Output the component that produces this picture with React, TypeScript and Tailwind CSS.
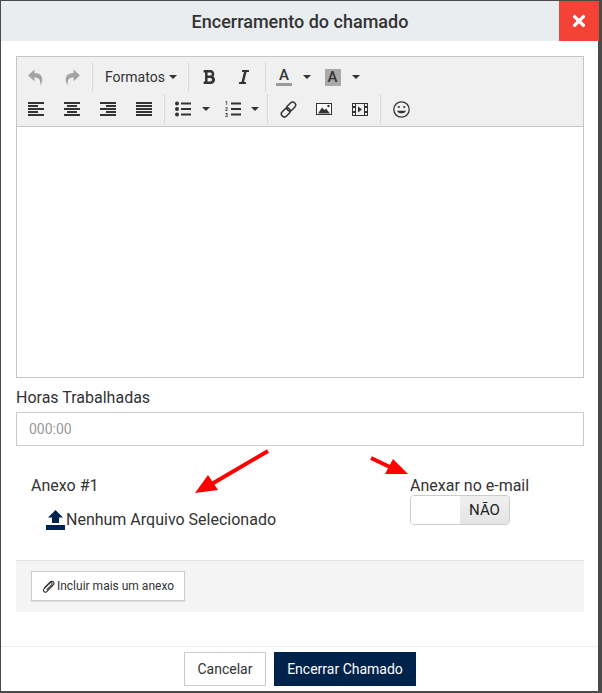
import React from "react";
import { FaBold, FaItalic, FaTimes } from "react-icons/fa";

const Sep = () => <div className="w-px h-[30px] bg-[#d9d9d9] shrink-0" />;
const Gap = ({ w }: { w: number }) => <div className="shrink-0" style={{ width: w }} />;
const Caret = ({ w = 10 }: { w?: number }) => (
  <div className="flex justify-center shrink-0" style={{ width: w }}>
    <span className="block w-0 h-0 border-x-[4px] border-x-transparent border-t-[4px] border-t-[#333]" />
  </div>
);
const Btn = ({ children, w = 36 }: { children: React.ReactNode; w?: number }) => (
  <div className="h-[30px] flex items-center justify-center text-[#333] shrink-0" style={{ width: w }}>{children}</div>
);

const Align = ({ kind }: { kind: "l" | "c" | "r" | "j" }) => {
  const rows = [16, 10, 16, 10, 16];
  return (
    <svg width="16" height="14" viewBox="0 0 16 14" fill="#333">
      {rows.map((w, i) => {
        const ww = kind === "j" ? 16 : w;
        const x = kind === "l" || kind === "j" ? 0 : kind === "c" ? (16 - ww) / 2 : 16 - ww;
        return <rect key={i} x={x} y={i * 3} width={ww} height="2" />;
      })}
    </svg>
  );
};

const Undo = ({ flip }: { flip?: boolean }) => (
  <svg width="16" height="17" viewBox="0 0 15 16" fill="#a3a3a3" className={flip ? "-scale-x-100" : ""}>
    <path d="M6 0.5 0 6l6 5.5V8c4 0 6 1.5 5.5 7.5C14 12.5 15.5 3.8 6 3.8Z" />
  </svg>
);

const Bullets = () => (
  <svg width="16" height="16" viewBox="0 0 16 16" fill="#333">
    <circle cx="2" cy="2.5" r="2" /><circle cx="2" cy="8" r="2" /><circle cx="2" cy="13.5" r="2" />
    <rect x="6" y="1.5" width="10" height="2" /><rect x="6" y="7" width="10" height="2" /><rect x="6" y="12.5" width="10" height="2" />
  </svg>
);
const Numbers = () => (
  <svg width="16" height="18" viewBox="0 0 16 18" fill="#333">
    <text x="0" y="5" fontSize="5" fontWeight="700" fontFamily="Roboto, sans-serif">1</text>
    <text x="0" y="11" fontSize="5" fontWeight="700" fontFamily="Roboto, sans-serif">2</text>
    <text x="0" y="17" fontSize="5" fontWeight="700" fontFamily="Roboto, sans-serif">3</text>
    <rect x="6" y="2.5" width="10" height="2" /><rect x="6" y="8" width="10" height="2" /><rect x="6" y="13.5" width="10" height="2" />
  </svg>
);
const LinkIcon = () => (
  <svg width="17" height="17" viewBox="0 0 17 17" fill="none" stroke="#333" strokeWidth="1.5">
    <rect x="8.2" y="0.5" width="6" height="10" rx="3" transform="rotate(45 11.2 5.5)" />
    <rect x="2.8" y="6.5" width="6" height="10" rx="3" transform="rotate(45 5.8 11.5)" />
  </svg>
);
const ImageIcon = () => (
  <svg width="16" height="14" viewBox="0 0 16 14">
    <rect x="0.5" y="1.5" width="15" height="11" fill="#fff" stroke="#333" />
    <path d="M2 11.5 6 5.5 8.5 8 10 6.5 14 11.5Z" fill="#333" />
    <circle cx="12.5" cy="4" r="1.2" fill="#333" />
  </svg>
);
const FilmIcon = () => (
  <svg width="16" height="13" viewBox="0 0 16 13" fill="#333">
    <path fillRule="evenodd" d="M0 0H16V13H0ZM1 1V3H3V1ZM13 1V3H15V1ZM1 5V8H3V5ZM13 5V8H15V5ZM1 10V12H3V10ZM13 10V12H15V10ZM4 1V12H12V1Z" />
    <path d="M6 3.5 10 6.5 6 9.5Z" />
  </svg>
);
const Smile = () => (
  <svg width="17" height="17" viewBox="0 0 17 17" fill="none" stroke="#333" strokeWidth="1.3">
    <circle cx="8.5" cy="8.5" r="7.7" />
    <circle cx="5.8" cy="6" r="1.1" fill="#333" stroke="none" />
    <circle cx="11.2" cy="6" r="1.1" fill="#333" stroke="none" />
    <path d="M4 9.8c1 3.4 8 3.4 9 0Z" fill="#333" stroke="none" />
  </svg>
);
const Clip = () => (
  <svg width="13" height="13" viewBox="0 0 13 13" fill="none" stroke="#333" strokeWidth="1.1">
    <path d="M2.2 8 8 2.2c1.2-1.2 3-1 3.6 0 .7 1 .4 2.2-.4 3L5 11.4c-1 1-2.3 1-3 .3s-.8-2 .2-3l5.6-5.6c.7-.7 1.5-.7 2-.2s.5 1.3-.2 2L4.6 9.9" />
  </svg>
);

export default function App() {
  return (
    <div className="relative w-[602px] h-[693px] bg-[#4a4a4a] pt-px pl-px overflow-hidden" style={{ fontFamily: "Roboto, sans-serif" }}>
      <div className="w-[597px] h-[690px] bg-white flex flex-col text-[#333]">
        <div className="h-[40px] bg-[#eaedf0] flex items-center shrink-0">
          <div className="flex-1 text-center text-[18px] font-medium text-[#333] pl-[40px]">Encerramento do chamado</div>
          <div className="w-[40px] h-[40px] bg-[#f44336] text-white flex items-center justify-center -mr-px"><FaTimes size={18} /></div>
        </div>

        <div className="flex-1 px-[15px] pt-[15px] flex flex-col">
          <div className="w-[568px] h-[322px] border border-[#c5c5c5] flex flex-col">
            <div className="h-[70px] bg-[#f0f0f0] border-b border-[#c5c5c5] shrink-0 pt-[5px] pl-px">
              <div className="flex items-center h-[30px]">
                <Btn><Undo /></Btn>
                <Btn><Undo flip /></Btn>
                <Gap w={2} />
                <Sep />
                <div className="w-[95px] shrink-0 pl-[12px] flex items-center gap-[4px] text-[14px] text-[#333]">Formatos<span className="block w-0 h-0 border-x-[4px] border-x-transparent border-t-[4px] border-t-[#333]" /></div>
                <Sep />
                <Btn w={39}><FaBold size={16} /></Btn>
                <Btn w={32}><FaItalic size={16} /></Btn>
                <Gap w={5} />
                <Sep />
                <Btn w={36}>
                  <span className="w-[16px] text-center text-[15px] font-medium leading-[15px] border-b-[3px] border-[#999]">A</span>
                </Btn>
                <Caret />
                <Gap w={1} />
                <Btn w={39}>
                  <span className="bg-[#a9a9a9] w-[16px] h-[17px] flex items-center justify-center text-[15px] font-medium">A</span>
                </Btn>
                <Caret w={8} />
              </div>
              <div className="flex items-center h-[30px] mt-[2px]">
                <Btn><Align kind="l" /></Btn>
                <Btn><Align kind="c" /></Btn>
                <Btn><Align kind="r" /></Btn>
                <Btn><Align kind="j" /></Btn>
                <Gap w={2} />
                <Sep />
                <Btn><Bullets /></Btn>
                <Caret />
                <Gap w={5} />
                <Btn w={34}><Numbers /></Btn>
                <Caret />
                <Gap w={7} />
                <Sep />
                <Gap w={2} />
                <Btn><LinkIcon /></Btn>
                <Btn><ImageIcon /></Btn>
                <Btn><FilmIcon /></Btn>
                <Gap w={2} />
                <Sep />
                <Btn w={40}><Smile /></Btn>
              </div>
            </div>
            <div className="flex-1 bg-white" />
          </div>

          <div className="text-[16px] leading-[20px] mt-[10px] mb-[4px] text-[#333]">Horas Trabalhadas</div>
          <div className="w-[568px] h-[34px] border border-[#ccc] flex items-center px-[12px] text-[14px] text-[#999]">000:00</div>

          <div className="w-[568px] mt-[14px] bg-white">
            <div className="h-[100px] flex">
              <div className="w-[394px] pl-[15px] pt-[16px]">
                <div className="text-[16px] leading-[20px]">Anexo #1</div>
                <div className="flex items-center mt-[14px] pl-[15px] h-[20px] text-[16px]">
                  <svg width="20" height="20" viewBox="0 0 20 20" fill="#00234b" className="shrink-0">
                    <path d="M9.5 0 17 7.5H13V13H6V7.5H2Z" /><rect y="15" width="19" height="5" />
                  </svg>
                  Nenhum Arquivo Selecionado
                </div>
              </div>
              <div className="pt-[16px]">
                <div className="text-[16px] leading-[20px] -mb-px">Anexar no e-mail</div>
                <div className="w-[100px] h-[30px] border border-[#ccc] rounded-[4px] flex overflow-hidden">
                  <div className="w-[49px] bg-white" />
                  <div className="flex-1 bg-gradient-to-b from-[#f0f0f0] to-[#e4e4e4] flex items-center justify-center text-[15px] text-[#222]">NÃO</div>
                </div>
              </div>
            </div>
            <div className="h-[52px] bg-[#f4f4f4] border-t border-[#e2e2e2] flex items-start pt-[10px] pl-[15px]">
              <div className="w-[154px] h-[30px] bg-white border border-[#ccc] shadow-[0_1px_1px_rgba(0,0,0,0.08)] flex items-center justify-center gap-[2px] text-[12px] text-[#333]">
                <Clip />Incluir mais um anexo
              </div>
            </div>
          </div>
        </div>

        <div className="h-[45px] border-t border-[#eee] flex items-start justify-end pt-[5px] pr-[182px] gap-[8px] shrink-0">
          <div className="w-[82px] h-[34px] bg-white border border-[#ccc] flex items-center justify-center text-[14px]">Cancelar</div>
          <div className="w-[142px] h-[34px] bg-[#00234b] text-white flex items-center justify-center text-[14px]">Encerrar Chamado</div>
        </div>
      </div>

      <svg className="absolute left-0 top-0 pointer-events-none" width="602" height="693">
        <line x1="268" y1="451" x2="210" y2="485" stroke="#f00" strokeWidth="4" />
        <polygon points="195,493 208,475 218,490" fill="#f00" />
        <line x1="371" y1="458" x2="392" y2="468" stroke="#f00" strokeWidth="4" />
        <polygon points="408,474 393,459 385,474" fill="#f00" />
      </svg>
    </div>
  );
}
